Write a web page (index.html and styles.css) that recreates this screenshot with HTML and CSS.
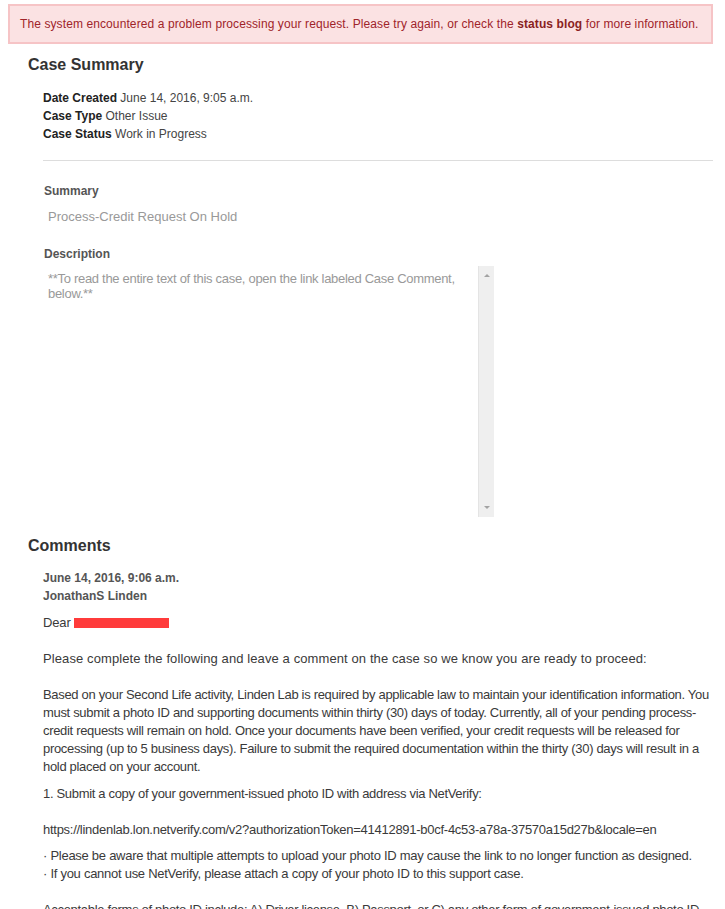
FILE: index.html
```html
<!DOCTYPE html>
<html lang="en">
<head>
    <meta charset="UTF-8">
    <meta name="viewport" content="width=device-width, initial-scale=1.0">
    <title>Case Summary</title>
    <link rel="stylesheet" href="styles.css">
</head>
<body>
    <div class="page">
        <div class="alert">
            The system encountered a problem processing your request. Please try again, or check the <b>status blog</b> for more information.
        </div>

        <div class="section">
            <h2>Case Summary</h2>
            <div class="details">
                <div><b>Date Created</b> June 14, 2016, 9:05 a.m.</div>
                <div><b>Case Type</b> Other Issue</div>
                <div><b>Case Status</b> Work in Progress</div>
            </div>
            <hr class="divider">
            <div class="field first">
                <div class="label">Summary</div>
                <div class="value">Process-Credit Request On Hold</div>
            </div>
            <div class="field">
                <div class="label">Description</div>
                <div class="desc-box">
                    <div class="desc-text">**To read the entire text of this case, open the link labeled Case Comment, below.**</div>
                    <div class="scrollbar">
                        <span class="arrow up"></span>
                        <span class="arrow down"></span>
                    </div>
                </div>
            </div>
        </div>

        <div class="section">
            <h2 class="comments-title">Comments</h2>
            <div class="comment">
                <div class="meta">June 14, 2016, 9:06 a.m.<br>JonathanS Linden</div>
                <p>Dear <span class="redacted"></span></p>
                <p class="gap wide">Please complete the following and leave a comment on the case so we know you are ready to proceed:</p>
                <p class="gap dense">Based on your Second Life activity, Linden Lab is required by applicable law to maintain your identification information. You must submit a photo ID and supporting documents within thirty (30) days of today. Currently, all of your pending process-credit requests will remain on hold. Once your documents have been verified, your credit requests will be released for processing (up to 5 business days). Failure to submit the required documentation within the thirty (30) days will result in a hold placed on your account.</p>
                <p class="dense">1. Submit a copy of your government-issued photo ID with address via NetVerify:</p>
                <p class="gap narrow">https://lindenlab.lon.netverify.com/v2?authorizationToken=41412891-b0cf-4c53-a78a-37570a15d27b&amp;locale=en</p>
                <p class="tight narrow">· Please be aware that multiple attempts to upload your photo ID may cause the link to no longer function as designed.<br>· If you cannot use NetVerify, please attach a copy of your photo ID to this support case.</p>
                <p class="last dense">Acceptable forms of photo ID include: A) Driver license, B) Passport, or C) any other form of government-issued photo ID.</p>
            </div>
        </div>
    </div>
</body>
</html>
```

FILE: styles.css
```css
*{
    margin:0;
    padding:0;
    box-sizing:border-box;
}
body{
    background-color:#fff;
    font-family:"Liberation Sans", Arial, sans-serif;
    font-size:13px;
    line-height:18px;
    color:#3a3a3a;
}
.page{
    padding:4px 12px 0 8px;
}
.alert{
    background-color:#fbe2e3;
    border:2px solid #f6c4c6;
    color:#a0242a;
    font-size:12px;
    letter-spacing:0.1px;
    padding:9px 10px;
    line-height:18px;
}
.alert b{
    color:#8a1f22;
}
.section{
    padding-left:20px;
}
h2{
    font-size:16px;
    font-weight:bold;
    color:#333;
    margin-top:11px;
    line-height:20px;
}
.details{
    margin-top:14px;
    padding-left:15px;
    font-size:12px;
    color:#444;
}
.details b{
    color:#222;
}
.divider{
    border:none;
    border-top:1px solid #ddd;
    margin:17px 0 0 15px;
}
.field{
    padding-left:16px;
}
.field.first{
    margin-top:21px;
}
.label{
    font-size:12px;
    font-weight:bold;
    color:#555;
}
.value{
    color:#999;
    padding-left:4px;
    margin-top:8px;
    margin-bottom:19px;
}
.desc-box{
    display:flex;
    width:451px;
    height:251px;
    margin-top:3px;
    margin-left:-1px;
}
.desc-text{
    flex:1;
    color:#999;
    letter-spacing:-0.3px;
    padding:5px 8px 0 5px;
    line-height:15px;
}
.scrollbar{
    width:16px;
    background-color:#efefef;
    border-left:1px solid #e4e4e4;
    display:flex;
    flex-direction:column;
    justify-content:space-between;
    align-items:center;
    padding:8px 0;
}
.arrow{
    width:0;
    height:0;
    border-left:3px solid transparent;
    border-right:3px solid transparent;
}
.arrow.up{
    border-bottom:3px solid #a3a3a3;
}
.arrow.down{
    border-top:3px solid #a3a3a3;
}
.comments-title{
    margin-top:19px;
}
.comment{
    padding-left:15px;
    margin-top:13px;
    letter-spacing:-0.15px;
}
.meta{
    font-weight:bold;
    color:#555;
    font-size:12px;
    letter-spacing:0;
}
.comment p{
    margin-top:9px;
}
.comment p.gap{
    margin-top:18px;
}
.comment p.wide{
    letter-spacing:0.1px;
}
.comment p.dense{
    letter-spacing:-0.32px;
}
.comment p.narrow{
    letter-spacing:-0.27px;
}
.comment p.tight{
    margin-top:8px;
}
.comment p.last{
    margin-top:18px;
}
.redacted{
    display:inline-block;
    width:95px;
    height:10px;
    background-color:#ff3b3b;
    vertical-align:-1px;
}
```
